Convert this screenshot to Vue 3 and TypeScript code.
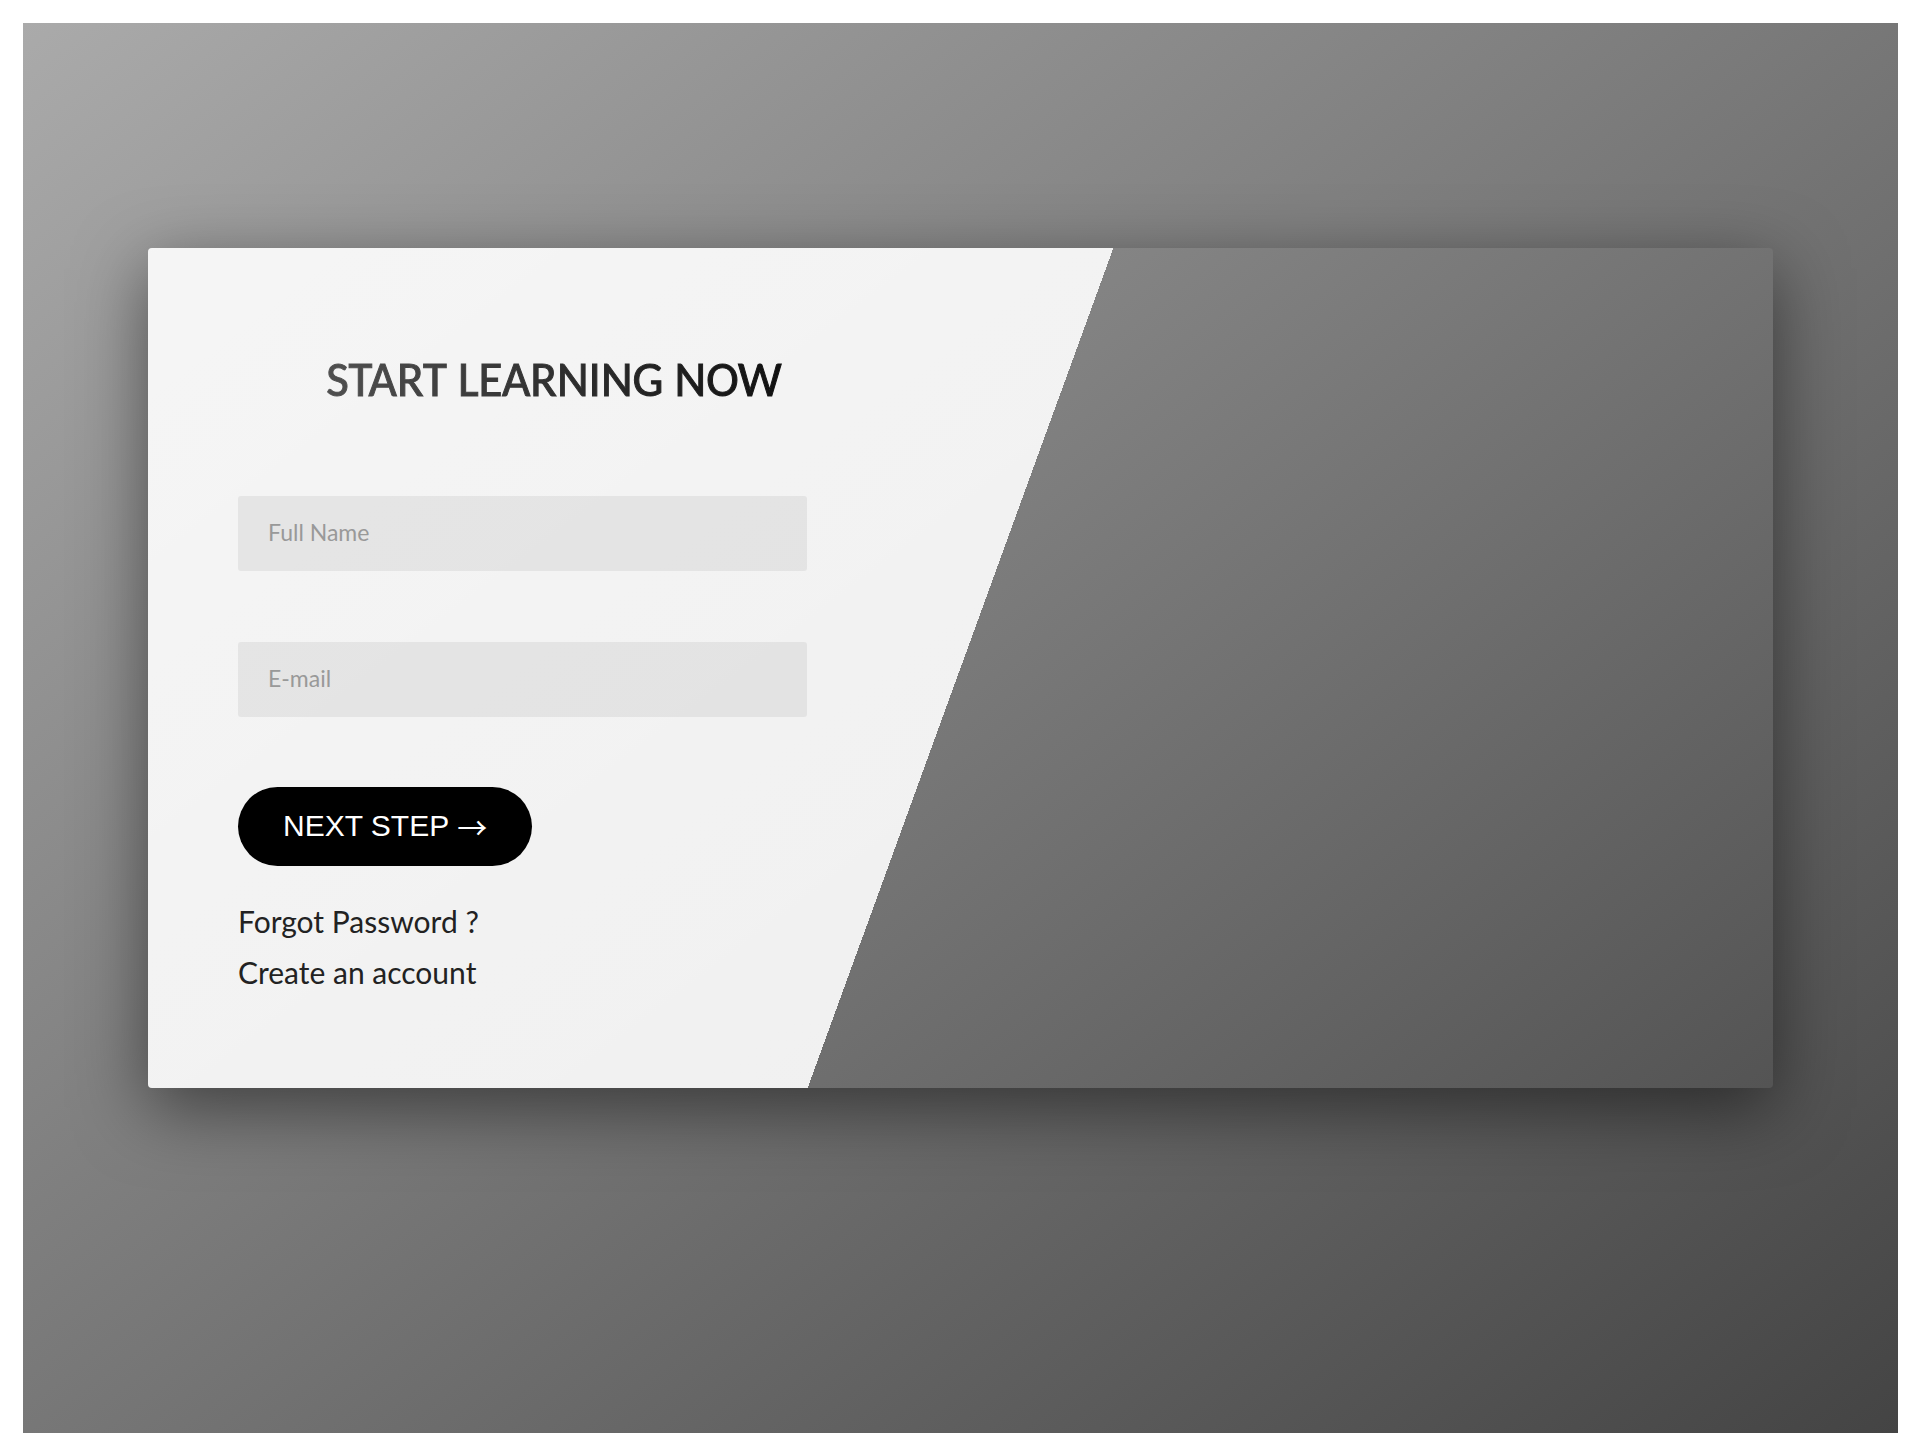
<script setup lang="ts">
import { ref } from 'vue'

const fullName = ref('')
const email = ref('')
</script>

<template>
  <main class="page">
    <section class="card">
      <form class="form" @submit.prevent>
        <h1 class="title">START LEARNING NOW</h1>
        <div class="fields">
          <input
            v-model="fullName"
            class="field"
            type="text"
            name="name"
            placeholder="Full Name"
            aria-label="Full Name"
          />
          <input
            v-model="email"
            class="field"
            type="email"
            name="email"
            placeholder="E-mail"
            aria-label="E-mail"
          />
        </div>
        <button class="next" type="submit">NEXT STEP <span class="arrow">→</span></button>
        <nav class="links">
          <a href="#forgot">Forgot Password ?</a>
          <a href="#create">Create an account</a>
        </nav>
      </form>
    </section>
  </main>
</template>

<style>
body {
  margin: 0;
  background: #fff;
}
</style>

<style scoped>
.page {
  box-sizing: border-box;
  min-height: calc(100vh - 46px);
  margin: 23px 22px 23px 23px;
  padding: 225px 125px;
  background: linear-gradient(to right bottom, #aaa, #444);
  font-family: Lato, sans-serif;
}

.card {
  padding: 90px;
  border-radius: 4px;
  background: linear-gradient(110deg, rgba(255, 255, 255, 0.9) 50%, transparent 50%);
  box-shadow: 0 20px 70px rgba(0, 0, 0, 0.5);
}

.form {
  display: flex;
  flex-direction: column;
  align-items: flex-start;
  width: 39.4%;
}

.title {
  width: 111%;
  margin: 0 0 76px;
  background: linear-gradient(to right, #5c5c5c, #040404);
  background-clip: text;
  color: transparent;
  font-family: Carlito, Lato, sans-serif;
  font-size: 49px;
  font-weight: 400;
  line-height: 82px;
  text-align: center;
  -webkit-text-stroke: 1px transparent;
}

.fields {
  display: grid;
  gap: 71px;
  width: 100%;
  margin-bottom: 70px;
}

.field {
  box-sizing: border-box;
  width: 100%;
  height: 75px;
  margin: 0;
  padding: 0 30px 3px;
  border: 0;
  border-radius: 3px;
  outline: none;
  background: rgba(160, 160, 160, 0.18);
  color: #333;
  font-family: inherit;
  font-size: 23px;
}

.field::placeholder {
  color: #999;
}

.next {
  display: flex;
  align-items: center;
  gap: 8px;
  height: 79px;
  margin: 0 0 30px;
  padding: 0 45px 2px;
  border: 0;
  border-radius: 40px;
  background: #000;
  color: #fff;
  font-family: "Liberation Sans", Arial, sans-serif;
  font-size: 30px;
  cursor: pointer;
}

.arrow {
  font-family: "Noto Sans CJK SC", sans-serif;
}

.links {
  display: flex;
  flex-direction: column;
}

.links a {
  color: #222;
  font-size: 30px;
  font-weight: 400;
  line-height: 51px;
  text-decoration: none;
}
</style>
